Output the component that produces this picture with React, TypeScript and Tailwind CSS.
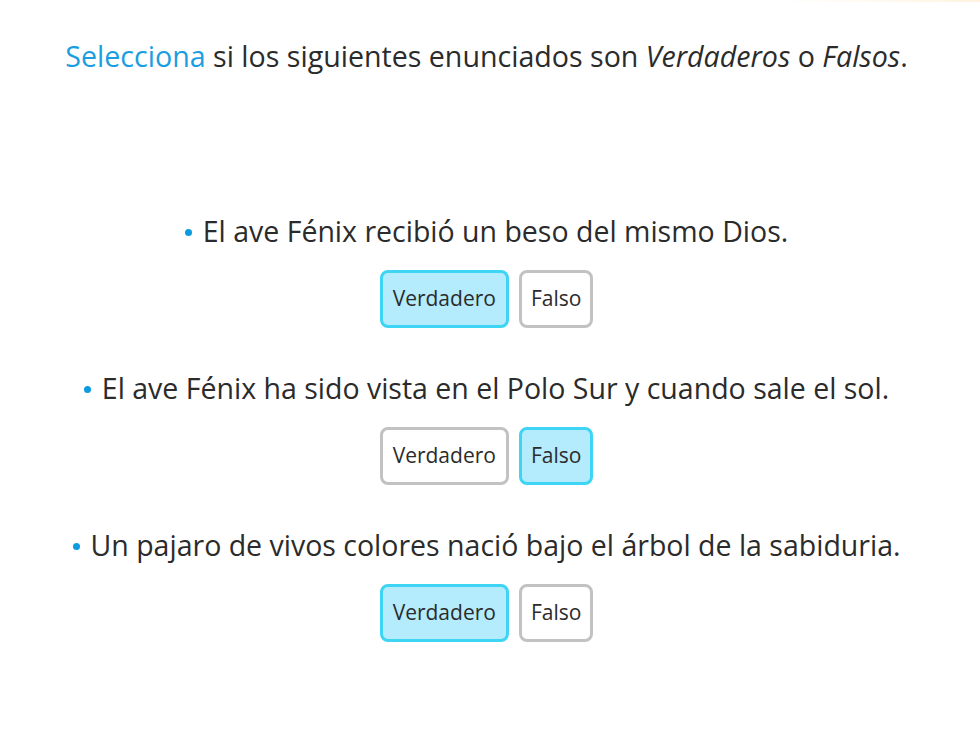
const statements = [
  { text: "El ave Fénix recibió un beso del mismo Dios.", answer: "v" },
  { text: "El ave Fénix ha sido vista en el Polo Sur y cuando sale el sol.", answer: "f" },
  { text: "Un pajaro de vivos colores nació bajo el árbol de la sabiduria.", answer: "v" },
];

function OptionButton({ label, selected, narrow }: { label: string; selected: boolean; narrow?: boolean }) {
  const pad = narrow ? "px-[9px]" : "px-[10px]";
  const look = selected
    ? "border-[#3dd5f3] bg-[#b5ecfd]"
    : "border-[#c2c2c2] bg-white";
  return (
    <button className={`h-[58px] ${pad} rounded-[8px] border-[3px] ${look} text-[21px] text-[#2b2b2b]`}>
      {label}
    </button>
  );
}

export default function App() {
  return (
    <div
      className="relative w-[980px] h-[735px] pr-[7px] bg-white text-[#2b2b2b] overflow-hidden"
      style={{ fontFamily: '"Open Sans", "Noto Sans", sans-serif' }}
    >
      <div className="absolute top-0 right-0 w-[200px] h-[2px] bg-gradient-to-r from-white to-[#fff3e0]" />
      <p className="pt-[36px] text-center text-[28.6px] leading-[40px]">
        <span className="text-[#1a9ee0]">Selecciona</span> si los siguientes enunciados son{" "}
        <em>Verdaderos</em> o <em>Falsos</em>.
      </p>
      <div className="mt-[135px] flex flex-col gap-[40px]">
        {statements.map((s) => (
          <div key={s.text} className="flex flex-col items-center">
            <p className="flex items-center text-[28.5px] leading-[40px]">
              <span className="inline-block w-[7px] h-[7px] rounded-full bg-[#0d9be0] mr-[11px] mt-[2px]" />
              {s.text}
            </p>
            <div className="mt-[19px] flex gap-[10px]">
              <OptionButton label="Verdadero" selected={s.answer === "v"} />
              <OptionButton label="Falso" selected={s.answer === "f"} narrow />
            </div>
          </div>
        ))}
      </div>
    </div>
  );
}
